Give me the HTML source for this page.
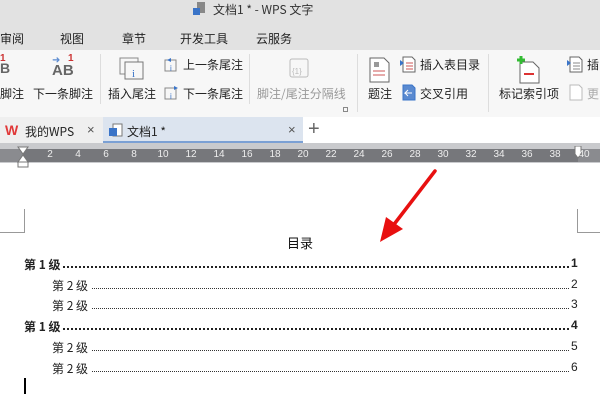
<!DOCTYPE html>
<html><head><meta charset="utf-8"><style>
*{margin:0;padding:0;box-sizing:border-box}
body{width:600px;height:400px;overflow:hidden;position:relative;background:#fff;font-family:"Liberation Sans","Noto Sans CJK SC",sans-serif;font-size:12px;color:#222}
.a{position:absolute;white-space:nowrap}
.cj{font-family:"Noto Sans CJK SC","WenQuanYi Zen Hei",sans-serif}
.rl{position:absolute;top:149px;font-size:10px;color:#eee;transform:translateX(-50%)}
.row{position:absolute;left:0;width:600px;height:16px;font-size:12px}
.row .t{position:absolute;top:0;background:#fff;padding-right:2px}
.row .d{position:absolute;top:11px;right:31px;height:0;border-bottom:1px dotted #333}
.row .n{position:absolute;left:571px;top:0}
.b .t{font-weight:bold}
.b .d{border-bottom:2px dotted #222;top:10px}
.b .n{font-weight:bold}
</style></head><body>
<!-- title & menu -->
<div class="a" style="left:0;top:0;width:600px;height:50px;background:#e2e2e2"></div>
<svg class="a" style="left:192px;top:2px" width="16" height="14"><rect x="5" y="0" width="8" height="11" fill="#888"/><rect x="1" y="6" width="7" height="7" fill="#3a74c8"/></svg>
<div class="a cj" style="left:213px;top:1px;font-size:12px;color:#333">文档1 * - WPS 文字</div>
<div class="a cj" style="left:0;top:30px;font-size:12px;color:#222">审阅</div>
<div class="a cj" style="left:60px;top:30px">视图</div>
<div class="a cj" style="left:122px;top:30px">章节</div>
<div class="a cj" style="left:180px;top:30px">开发工具</div>
<div class="a cj" style="left:256px;top:30px">云服务</div>
<!-- ribbon -->
<div class="a" style="left:0;top:50px;width:600px;height:67px;background:#f7f7f7"></div>
<div class="a" style="left:100px;top:54px;width:1px;height:50px;background:#ddd"></div>
<div class="a" style="left:249px;top:54px;width:1px;height:50px;background:#ddd"></div>
<div class="a" style="left:357px;top:54px;width:1px;height:58px;background:#ddd"></div>
<div class="a" style="left:488px;top:54px;width:1px;height:58px;background:#ddd"></div>
<div class="a" style="left:0;top:60px;font-size:14px;color:#666;font-weight:bold">B</div>
<div class="a" style="left:0;top:53px;font-size:10px;color:#c33;font-weight:bold">1</div>
<div class="a" style="left:52px;top:62px;font-size:15px;color:#666;font-weight:bold">AB</div>
<div class="a" style="left:52px;top:55px;font-size:10px;color:#5a8ad0">➜</div>
<div class="a" style="left:68px;top:53px;font-size:10px;color:#c33;font-weight:bold">1</div>
<div class="a cj" style="left:0;top:85px">脚注</div>
<div class="a cj" style="left:33px;top:85px">下一条脚注</div>
<svg class="a" style="left:119px;top:57px" width="26" height="24"><rect x="1" y="1" width="18" height="16" fill="none" stroke="#888"/><rect x="6" y="5" width="18" height="17" fill="#f7f7f7" stroke="#777"/><text x="13" y="20" font-size="11" fill="#3a74c8" font-family="Liberation Serif">i</text></svg>
<div class="a cj" style="left:108px;top:85px">插入尾注</div>
<svg class="a" style="left:163px;top:57px" width="16" height="16"><rect x="2" y="3" width="11" height="11" fill="none" stroke="#888"/><text x="7" y="14" font-size="8" fill="#3a74c8">i</text><path d="M4 3 l4 -2 v4z" fill="#3a74c8"/></svg>
<svg class="a" style="left:163px;top:85px" width="16" height="16"><rect x="2" y="3" width="11" height="11" fill="none" stroke="#888"/><text x="7" y="14" font-size="8" fill="#3a74c8">i</text><path d="M11 1 l4 2 -4 2z" fill="#3a74c8"/></svg>
<div class="a cj" style="left:183px;top:56px">上一条尾注</div>
<div class="a cj" style="left:183px;top:85px">下一条尾注</div>
<svg class="a" style="left:288px;top:57px" width="24" height="24"><rect x="2" y="2" width="18" height="18" rx="2" fill="none" stroke="#bbb"/><text x="4" y="17" font-size="8" fill="#bbb">{1}</text></svg>
<div class="a cj" style="left:257px;top:85px;color:#999">脚注/尾注分隔线</div>
<div class="a" style="left:343px;top:107px;width:5px;height:5px;border:1px solid #888"></div>
<svg class="a" style="left:369px;top:57px" width="22" height="26"><path d="M1 1h14l5 5v19H1z" fill="#fff" stroke="#666"/><rect x="5" y="5" width="5" height="5" fill="#999"/><path d="M4 14h12M4 18h12" stroke="#c55" /></svg>
<div class="a cj" style="left:368px;top:85px">题注</div>
<svg class="a" style="left:400px;top:56px" width="16" height="17"><path d="M3 1h9l3 3v12H3z" fill="#fff" stroke="#666"/><path d="M6 7h7M6 10h7M6 13h7" stroke="#c55"/><path d="M0 4l4 3-4 3z" fill="#3a74c8"/></svg>
<svg class="a" style="left:400px;top:84px" width="16" height="17"><path d="M3 1h9l3 3v12H3z" fill="#5a8ad0" stroke="#3a74c8"/><path d="M12 9h-7l3-3M5 9l3 3" stroke="#fff" fill="none"/></svg>
<div class="a cj" style="left:420px;top:56px">插入表目录</div>
<div class="a cj" style="left:420px;top:85px">交叉引用</div>
<svg class="a" style="left:515px;top:56px" width="26" height="28"><path d="M5 6h13l6 6v15H5z" fill="#fff" stroke="#666"/><path d="M9 18h10" stroke="#d33" stroke-width="2"/><path d="M2 4h8M6 0v8" stroke="#3b3" stroke-width="3"/></svg>
<div class="a cj" style="left:499px;top:85px">标记索引项</div>
<svg class="a" style="left:567px;top:56px" width="16" height="17"><path d="M3 1h9l3 3v12H3z" fill="#fff" stroke="#666"/><path d="M6 7h7M6 10h7M6 13h7" stroke="#888"/><path d="M0 4l4 3-4 3z" fill="#3a74c8"/></svg>
<svg class="a" style="left:567px;top:84px" width="16" height="17"><path d="M3 1h9l3 3v12H3z" fill="#fff" stroke="#bbb"/></svg>
<div class="a cj" style="left:587px;top:56px">插</div>
<div class="a cj" style="left:587px;top:85px;color:#aaa">更</div>
<!-- tabs -->
<div class="a" style="left:0;top:117px;width:103px;height:26px;background:#efefef"></div>
<div class="a" style="left:103px;top:117px;width:200px;height:26px;background:#dce4ef;border-bottom:2px solid #7ba0d4"></div>
<div class="a" style="left:5px;top:122px;font-size:14px;font-weight:bold;color:#e03838;font-family:'Liberation Sans',sans-serif">W</div>
<div class="a cj" style="left:25px;top:123px">我的WPS</div>
<div class="a" style="left:87px;top:122px;font-size:13px;color:#555">×</div>
<svg class="a" style="left:108px;top:123px" width="16" height="15"><rect x="5" y="1" width="9" height="12" fill="#fff" stroke="#777"/><rect x="1" y="5" width="8" height="8" fill="#3a74c8"/></svg>
<div class="a cj" style="left:127px;top:123px">文档1 *</div>
<div class="a" style="left:288px;top:122px;font-size:13px;color:#555">×</div>
<div class="a" style="left:308px;top:117px;font-size:20px;color:#666;line-height:24px">+</div>
<!-- ruler -->
<div class="a" style="left:0;top:143px;width:600px;height:20px;background:#c9cacd"></div>
<div class="a" style="left:0;top:149px;width:23px;height:13px;background:#8a8b8f"></div>
<div class="a" style="left:23px;top:149px;width:555px;height:13px;background:#76777b"></div>
<div class="a" style="left:578px;top:149px;width:22px;height:13px;background:#8a8b8f"></div>
<svg class="a" style="left:17px;top:146px" width="12" height="22"><path d="M1 1h10l-5 7z" fill="#fff" stroke="#777"/><path d="M1 16h10l-5-7z" fill="#fff" stroke="#777"/><rect x="1" y="16" width="10" height="5" fill="#fff" stroke="#777"/></svg>
<svg class="a" style="left:574px;top:146px" width="8" height="14"><path d="M1 0h6v8l-3 4-3-4z" fill="#fff" stroke="#777"/></svg>
<div class="rl" style="left:50px">2</div><div class="rl" style="left:78px">4</div><div class="rl" style="left:106px">6</div><div class="rl" style="left:134px">8</div><div class="rl" style="left:163px">10</div><div class="rl" style="left:191px">12</div><div class="rl" style="left:219px">14</div><div class="rl" style="left:247px">16</div><div class="rl" style="left:275px">18</div><div class="rl" style="left:303px">20</div><div class="rl" style="left:331px">22</div><div class="rl" style="left:359px">24</div><div class="rl" style="left:387px">26</div><div class="rl" style="left:415px">28</div><div class="rl" style="left:443px">30</div><div class="rl" style="left:471px">32</div><div class="rl" style="left:499px">34</div><div class="rl" style="left:527px">36</div><div class="rl" style="left:555px">38</div><div class="rl" style="left:584px">40</div>
<!-- document -->
<div class="a" style="left:24px;top:209px;width:1px;height:24px;background:#999"></div>
<div class="a" style="left:0;top:232px;width:25px;height:1px;background:#999"></div>
<div class="a" style="left:577px;top:209px;width:1px;height:24px;background:#999"></div>
<div class="a" style="left:577px;top:232px;width:23px;height:1px;background:#999"></div>
<div class="a cj" style="left:287px;top:233px;font-size:13px;color:#111">目录</div>
<div class="row b" style="top:256px"><div class="d" style="left:60px"></div><div class="t cj" style="left:24px">第 1 级</div><div class="n">1</div></div>
<div class="row" style="top:277px"><div class="d" style="left:92px"></div><div class="t cj" style="left:52px">第 2 级</div><div class="n">2</div></div>
<div class="row" style="top:297px"><div class="d" style="left:92px"></div><div class="t cj" style="left:52px">第 2 级</div><div class="n">3</div></div>
<div class="row b" style="top:318px"><div class="d" style="left:60px"></div><div class="t cj" style="left:24px">第 1 级</div><div class="n">4</div></div>
<div class="row" style="top:339px"><div class="d" style="left:92px"></div><div class="t cj" style="left:52px">第 2 级</div><div class="n">5</div></div>
<div class="row" style="top:360px"><div class="d" style="left:92px"></div><div class="t cj" style="left:52px">第 2 级</div><div class="n">6</div></div>
<div class="a" style="left:24px;top:378px;width:2px;height:16px;background:#000"></div>
<svg class="a" style="left:370px;top:165px" width="75" height="85"><path d="M65 6 L22 62" stroke="#e81010" stroke-width="3.5" stroke-linecap="round"/><path d="M10 77 L16 52 L33 64 Z" fill="#e81010"/></svg>
</body></html>
